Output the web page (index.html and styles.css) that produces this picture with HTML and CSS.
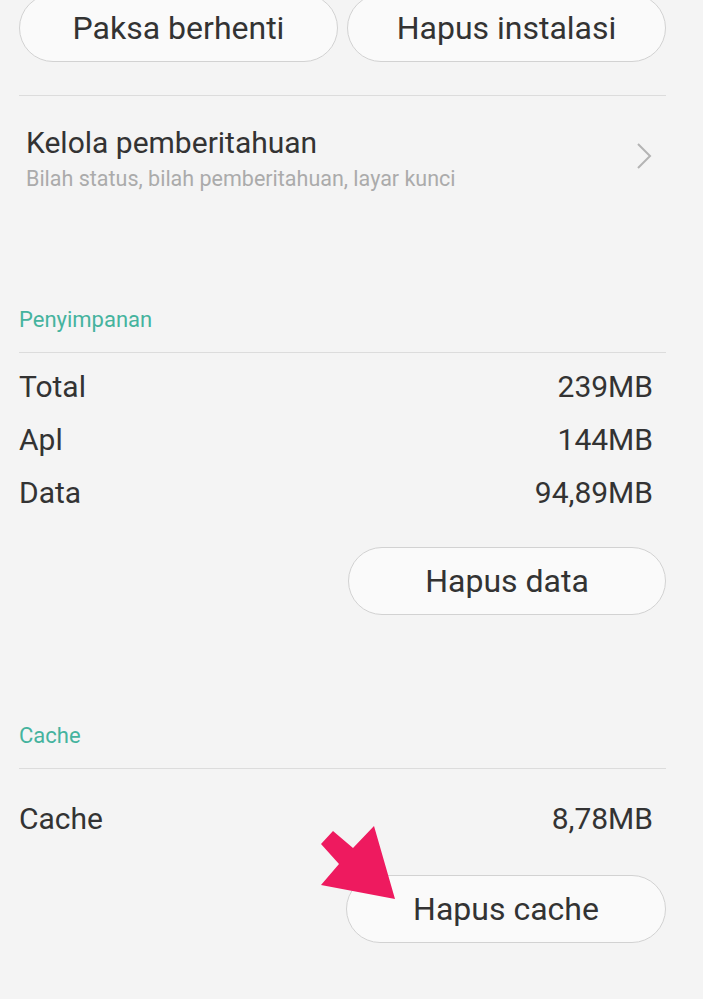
FILE: index.html
```html
<!DOCTYPE html>
<html lang="id">

<head>
    <meta charset="UTF-8" />
    <meta name="viewport" content="width=device-width, initial-scale=1.0" />
    <title>Info aplikasi</title>
    <link rel="stylesheet" href="styles.css">
</head>

<body>
    <div class="page">
        <div class="actions">
            <button class="pill">Paksa berhenti</button>
            <button class="pill">Hapus instalasi</button>
        </div>

        <div class="divider top-divider"></div>

        <div class="item">
            <div class="item-text">
                <div class="item-title">Kelola pemberitahuan</div>
                <div class="item-sub">Bilah status, bilah pemberitahuan, layar kunci</div>
            </div>
            <svg class="chevron" width="18" height="28" viewBox="0 0 18 28">
                <path d="M3 2 L15 14 L3 26" fill="none" stroke="#b4b4b4" stroke-width="2" />
            </svg>
        </div>

        <div class="section storage">
            <div class="section-title">Penyimpanan</div>
            <div class="divider"></div>
            <div class="rows">
                <div class="row"><span>Total</span><span class="value">239MB</span></div>
                <div class="row"><span>Apl</span><span class="value">144MB</span></div>
                <div class="row"><span>Data</span><span class="value">94,89MB</span></div>
            </div>
            <div class="right-action">
                <button class="pill">Hapus data</button>
            </div>
        </div>

        <div class="section cache">
            <div class="section-title">Cache</div>
            <div class="divider"></div>
            <div class="rows cache-rows">
                <div class="row"><span>Cache</span><span class="value">8,78MB</span></div>
            </div>
            <div class="right-action cache-action">
                <button class="pill wide">Hapus cache</button>
                <!-- pointer arrow over the button -->
                <svg class="pointer" width="80" height="80" viewBox="0 0 80 80">
                    <polygon points="13,6 33,23 54,1 75,74 1,60 19,39 1,19" fill="#ee1a5f" />
                </svg>
            </div>
        </div>
    </div>
</body>

</html>
```

FILE: styles.css
```css
* {
    box-sizing: border-box;
    margin: 0;
    padding: 0;
}

body {
    font-family: Roboto, "Noto Sans", sans-serif;
    background: #f4f4f4;
    color: #333;
    overflow: hidden;
}

.page {
    padding: 0 37px 0 19px;
    height: 999px;
}

.actions {
    display: flex;
    gap: 9px;
    margin-top: -6px;
}

.pill {
    font-family: Roboto, "Noto Sans", sans-serif;
    height: 68px;
    border: 1px solid #d2d2d2;
    border-radius: 34px;
    background: #fafafa;
    color: #333;
    font-size: 32px;
    cursor: pointer;
}

.actions .pill {
    flex: 1;
}

.divider {
    height: 1px;
    background: #dcdcdc;
}

.top-divider {
    margin-top: 33px;
}

.item {
    display: flex;
    align-items: center;
    padding: 29px 13px 0 7px;
}

.item-text {
    flex: 1;
}

.item-title {
    font-size: 30px;
    line-height: 36px;
}

.item-sub {
    font-size: 21.5px;
    line-height: 26px;
    margin-top: 5px;
    color: #ababab;
}

.chevron {
    margin-top: -6px;
}

.section-title {
    font-size: 22px;
    line-height: 24px;
    color: #45b39e;
    margin-bottom: 20px;
}

.storage {
    margin-top: 116px;
}

.rows {
    margin-top: 7px;
}

.row {
    display: flex;
    justify-content: space-between;
    font-size: 30px;
    line-height: 53px;
    padding-right: 13px;
}

.right-action {
    display: flex;
    justify-content: flex-end;
    margin-top: 28px;
}

.right-action .pill {
    width: 318px;
}

.cache {
    margin-top: 109px;
}

.cache-rows {
    margin-top: 23px;
}

.cache-action {
    position: relative;
    margin-top: 30px;
}

.right-action .pill.wide {
    width: 320px;
}

.pointer {
    position: absolute;
    left: 301px;
    top: -50px;
}
```
